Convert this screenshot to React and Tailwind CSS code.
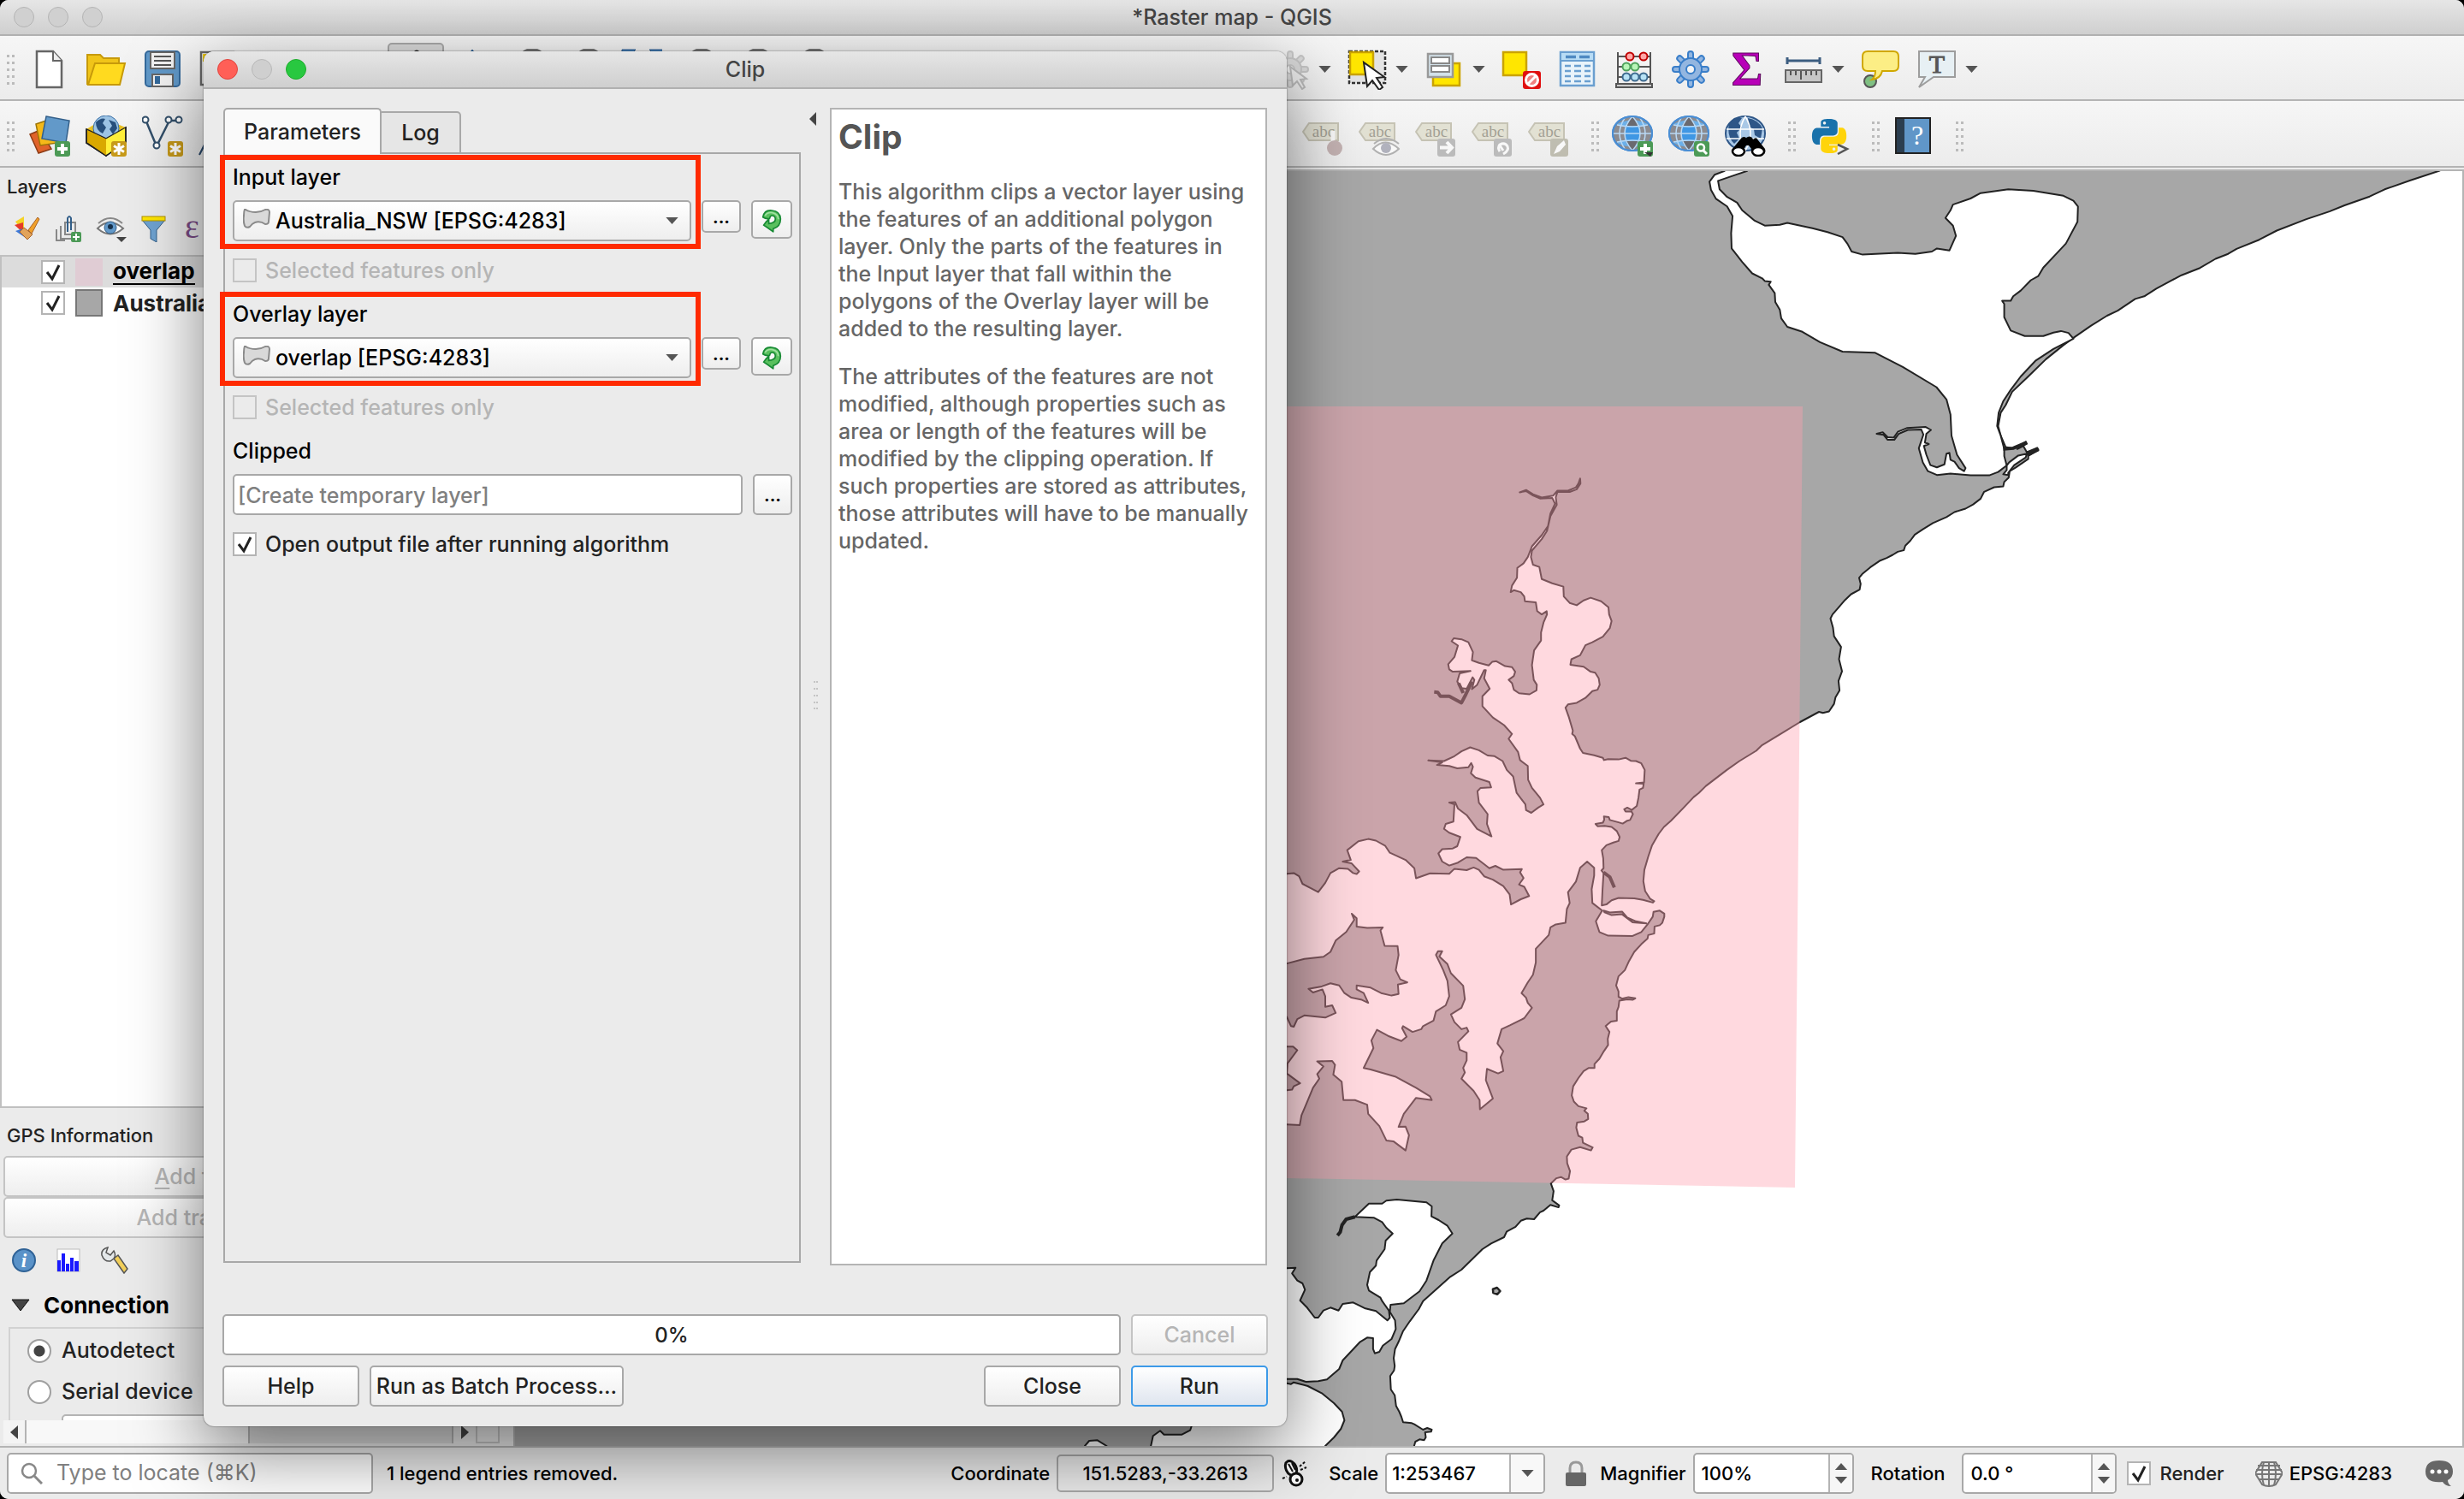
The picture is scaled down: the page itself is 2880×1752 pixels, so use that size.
import React from "react";

/* ---------- map geometry ---------- */

const sheet = (ox, oy, sx, sy) => (s) =>
  s.trim().split(/\s+/).map((p) => {
    const [x, y] = p.split(",").map(Number);
    return `${(ox + x / sx).toFixed(1)},${(oy + y / sy).toFixed(1)}`;
  }).join(" ");

const north = sheet(1960, 190, 1.7043, 2.24);
const mid = sheet(1500, 500, 2.45, 2.6133);
const south = sheet(1500, 900, 2.45, 2.8);
const far = sheet(1500, 1350, 2.45, 3);
const corner = sheet(900, 1480, 1.568, 3);

const SEA = [
  "2960,150",
  north(`1518,22 1460,47 1410,70 1380,89 1330,112 1300,128 1254,148 1195,178 1160,202 1115,226 1098,239 1073,252 1042,276 1005,295 985,309 955,330 931,350 913,357 878,388 857,401 825,427 790,459 770,478 735,515 700,560 668,600 655,635 645,655 640,690 645,715 655,745 668,748 680,742 695,731 697,736 678,750 690,742 697,758 718,747 720,752 700,768 700,776 675,798 663,808 661,825 652,836 650,848 632,850 612,862 605,880 590,895 575,906 553,915 537,928 510,944 490,960 474,974 465,990 455,1003 452,1015 440,1019 430,1027 418,1035 405,1042 385,1060 370,1076 363,1087 366,1103 364,1118 347,1130 335,1145 320,1168 310,1183 306,1194 311,1218 313,1240 327,1268 323,1300 329,1332 322,1357 324,1382 316,1400 313,1417 303,1437 291,1441 283,1438 245,1465 205,1497 170,1525 158,1540`),
  mid(`1306,1018 1270,1045 1210,1094 1190,1115 1175,1128 1145,1162 1110,1200 1090,1219 1075,1240 1056,1275 1045,1310 1034,1350 1031,1385 1036,1415 1050,1438 1062,1446 1058,1450 1030,1442 1005,1437 960,1436 940,1443 925,1456 912,1459 914,1410 917,1360 911,1352 917,1345 916,1315 912,1290 925,1275 945,1267 960,1262 963,1250 955,1232 940,1219 920,1216 900,1217 894,1210 915,1206 919,1197 918,1187 932,1189 935,1198 960,1205 972,1209 985,1200 993,1198 1001,1180 997,1172 980,1172 976,1165 985,1160 998,1167 1012,1155 1017,1130 1020,1105 1030,1100 1032,1087 1010,1086 1033,1083 1035,1045 1025,1025 1010,1018 995,1017 980,1008 960,1013 930,1012 918,1015 915,1008 890,1000 858,993 850,980 835,942 827,935 829,925 818,885 808,855 815,845 840,840 865,825 885,804 900,800 906,785 903,765 893,748 880,745 860,730 822,724 825,707 850,695 865,664 885,655 915,638 935,612 940,590 933,570 931,548 910,530 880,519 860,527 840,542 820,535 803,515 802,485 770,475 740,462 733,425 715,418 709,395 712,375 740,340 755,315 765,270 783,235 780,212 785,196 820,196 840,188 851,170 850,155 845,170 838,182 815,192 785,192 773,207 740,213 715,203 695,190 677,197 695,193 715,207 735,216 770,214 778,232 765,262 758,300 740,328 712,362 700,395 688,414 670,428 669,458 655,482 651,502 660,496 680,502 690,515 692,530 723,533 727,560 740,570 754,560 755,570 745,595 738,625 738,650 718,680 712,725 717,770 726,785 725,802 705,814 675,811 660,800 655,780 645,770 660,758 664,745 655,731 635,728 610,713 598,715 588,726 560,718 540,710 543,685 530,655 510,646 488,643 482,652 500,665 490,700 472,722 475,738 485,745 536,743 505,750 498,775 510,795 525,797 542,762 547,770 540,798 555,785 575,740 580,740 575,765 591,797 570,820 570,850 600,885 632,908 655,935 645,950 672,990 678,1015 700,1033 701,1075 712,1100 735,1130 745,1150 730,1160 710,1176 695,1168 693,1150 668,1115 658,1065 640,1045 628,1018 605,1003 585,1001 560,985 535,976 510,988 490,1003 460,1018 415,1016 455,1022 440,1030 475,1033 498,1040 530,1037 538,1024 543,1035 537,1055 550,1068 590,1082 595,1098 565,1100 556,1110 560,1145 585,1180 583,1210 596,1248 555,1225 525,1183 500,1163 492,1143 475,1145 490,1150 487,1203 465,1210 460,1225 475,1237 507,1250 498,1278 485,1285 455,1287 444,1300 455,1325 475,1337 500,1328 525,1312 552,1314 590,1345 607,1338 630,1350 683,1348 678,1358 688,1375 675,1395 690,1402 704,1430 680,1440 652,1456 648,1425 630,1400 600,1380 575,1370 560,1350 545,1343 525,1351 490,1347 475,1362 420,1361 380,1376 375,1345 350,1320 305,1298 292,1277 265,1261 243,1256 215,1263 183,1290 193,1320 170,1325 195,1330 217,1355 210,1363 200,1360 185,1347 160,1345 135,1360 120,1390 100,1418 55,1393 45,1370 30,1360 10,1362 -200,1362`),
  south(`-200,633 10,633 60,618 115,611 135,595 150,558 180,530 203,490 196,470 210,485 210,512 240,517 285,515 278,525 290,575 327,576 330,605 322,655 335,685 355,695 328,702 330,733 310,738 280,730 250,712 210,705 210,718 230,730 243,762 225,752 195,745 175,730 160,705 135,698 110,708 72,716 85,728 112,718 120,740 120,775 140,770 150,795 120,810 60,803 40,815 30,840 22,838 10,808 -200,808 -200,905 28,905 40,917 12,960 10,993 48,1025 30,1035 25,1046 10,1048 -200,1048 -200,1160 10,1160 47,1162 52,1130 65,1095 85,1040 103,1010 97,995 115,970 97,953 140,952 148,965 143,997 167,1020 172,1080 205,1080 240,1095 243,1125 275,1165 295,1212 315,1215 350,1245 360,1195 350,1167 330,1168 345,1125 380,1073 425,1080 420,1068 380,1040 320,1003 250,980 230,975 258,910 252,885 268,850 300,870 338,887 353,873 340,845 343,838 370,857 395,848 400,838 430,820 437,790 465,770 475,740 470,690 458,655 437,605 443,593 455,593 447,610 470,635 480,665 515,706 520,750 510,778 480,800 490,825 510,848 525,843 530,855 500,890 505,915 525,925 525,950 515,975 520,990 510,1010 545,1050 562,1080 563,1110 600,1075 580,1015 583,978 615,993 630,985 622,940 630,920 613,895 625,848 650,835 690,812 712,778 700,762 695,745 682,730 700,695 715,670 723,630 723,585 760,540 765,515 780,505 808,500 812,455 820,435 815,400 838,365 850,320 870,300 890,320 890,345 883,390 885,435 913,460 895,495 905,530 930,542 1000,543 1025,530 1045,502 1058,480 1060,464 1078,460 1091,470 1091,480 1085,500 1078,508 1063,512 1062,535 1045,540 1043,552 1025,570 1005,595 990,625 978,655 960,675 953,705 960,725 960,742 970,748 988,743 1008,747 1000,752 985,750 962,755 960,775 955,790 955,820 938,823 923,838 934,857 929,880 930,900 918,920 905,945 891,962 891,975 875,975 860,985 845,1008 830,1035 826,1065 832,1085 845,1100 868,1107 862,1115 872,1125 873,1142 862,1150 841,1154 839,1170 845,1197 856,1203 858,1220 886,1235 881,1245 850,1234 825,1242 812,1265 813,1287 821,1313 817,1337 808,1340 795,1332 782,1336 766,1353 774,1378 770,1408 790,1425 788,1431 765,1423 745,1442 735,1447 718,1470 697,1468 680,1475 665,1495 640,1510`),
  far(`632,288 595,310 570,330 510,402 478,427 400,512 388,540 362,583 343,617 330,655 320,680 316,712 319,740 317,755 306,775 308,822 319,842 323,880 332,900 338,918 343,937 368,940 375,944 400,963 412,957 425,963 423,970 406,972 408,990 403,1000 390,997 378,1005 370,1040`),
  "1700,1800 2960,1800",
].join(" ");

const BAY = north(`95,-20 95,22 75,32 65,50 68,72 78,95 100,115 111,140 108,185 109,225 130,260 150,290 170,303 175,310 187,312 183,320 195,342 196,365 205,385 208,408 220,430 250,443 285,470 330,495 395,498 450,535 517,588 537,620 545,660 547,715 558,765 575,800 572,808 562,800 553,783 545,778 543,760 537,762 533,790 518,798 505,792 497,765 492,742 502,737 494,733 497,710 506,700 495,692 458,695 440,705 432,720 420,719 410,706 398,710 412,713 420,726 433,726 442,710 460,700 487,699 491,712 482,748 490,785 500,808 518,818 545,814 585,819 622,819 640,810 657,793 652,768 652,750 645,715 638,690 641,655 650,625 665,595 685,560 715,518 750,488 790,461 780,446 765,441 750,445 730,454 693,454 665,440 652,405 652,370 648,362 665,362 670,350 685,335 705,308 720,297 730,275 755,240 775,212 798,155 799,115 790,100 770,87 710,74 660,70 605,80 585,94 550,110 545,125 535,145 550,165 556,192 543,230 518,225 508,233 475,239 440,236 370,241 348,233 340,213 330,195 300,182 270,172 220,158 205,163 175,165 155,152 130,125 120,105 100,90 85,70 82,48 140,22 140,-20`);
const CHANNEL = north(`657,793 662,785 680,767 697,762 695,772 672,792 660,812 660,818 650,816 657,805`);
const BREAKWATER_N = north(`650,750 670,748 697,733`);
const BREAKWATER_S = north(`697,765 720,750`);
const LAKE = far(`205,217 245,170 283,170 295,160 325,156 410,166 425,180 424,215 445,228 470,248 484,275 455,310 430,370 410,440 390,478 345,520 307,525 305,550 320,580 322,610 310,645 285,668 275,690 262,695 257,680 257,642 240,640 220,655 170,720 160,750 125,787 100,793 65,795 40,785 10,785 -100,785 -100,397 10,397 35,395 25,415 40,440 55,450 62,472 48,510 68,535 90,570 100,570 115,545 135,535 158,545 170,522 200,517 235,538 265,547 298,580 305,570 302,545 283,512 278,500 245,475 240,455 248,410 265,388 267,370 290,330 293,300 313,275 295,255 283,235 260,220`);
const LAGOON = corner("698,660 698,630 702,595 715,577 722,590 755,590 770,575 773,558 773,500 940,410") + " " + far(`10,800 22,803 30,797 70,810 110,835 145,870 168,900 175,930 165,960 145,990 120,1020 110,1060`);
const POND = corner("570,660 577,630 585,612 600,610 617,630 625,660");
const ISLAND = far("600,470 612,465 621,477 613,488 601,483");
const SPIT = south("917,460 935,466 970,463 985,483 1010,495 1040,502 1000,498 970,472 940,475 920,466");
const CREEK = mid("917,1358 935,1372 948,1404");
const CREEK2 = mid("432,807 442,808 450,820 475,820 510,840 520,820 540,775");
const CREEK3 = mid("502,780 515,810");
const CREEK4 = far("155,282 163,270 168,245 180,225 205,217");

function MapView() {
  const water = { fill: "#fff", stroke: "#222", strokeWidth: 2, strokeLinejoin: "round" };
  return (
    <svg viewBox="602 200 2276 1490" preserveAspectRatio="xMinYMin slice" className="block h-full w-full" role="img" aria-label="Map canvas">
      <rect x="0" y="0" width="3400" height="2200" fill="#a7a7a7" />
      <polygon points={SEA} {...water} />
      <polygon points={BAY} {...water} />
      <polygon points={CHANNEL} {...water} />
      <polyline points={BREAKWATER_N} fill="none" stroke="#222" strokeWidth="4" />
      <polyline points={BREAKWATER_S} fill="none" stroke="#222" strokeWidth="5" />
      <polygon points={LAKE} {...water} />
      <polygon points={LAGOON} {...water} />
      <polygon points={POND} {...water} />
      <polygon points={ISLAND} {...water} fill="#a7a7a7" strokeWidth="2.500" />
      <polygon points={SPIT} {...water} fill="#a7a7a7" />
      <g fill="none" stroke="#222" strokeLinejoin="round">
        <polyline points={CREEK} strokeWidth="4" />
        <polyline points={CREEK2} strokeWidth="4" />
        <polyline points={CREEK3} strokeWidth="4" />
        <polyline points={CREEK4} strokeWidth="4" />
      </g>
      <polygon points="1000,475 2107,475 2098,1388 1504,1377 1000,1368" fill="#ffa0af" fillOpacity="0.4" />
    </svg>
  );
}

/* ---------- icons ---------- */

const Svg = ({ children, box = 48, className = "size-12" }) => (
  <svg viewBox={`0 0 ${box} ${box}`} className={className} aria-hidden="true">{children}</svg>
);

const Badge = ({ fill = "#4c9a56", children }) => (
  <g>
    <rect x="30" y="30" width="18" height="18" rx="3" fill={fill} />
    {children}
  </g>
);
const Star = () => (
  <path d="M39 32v14M33 35.500l12 7M33 42.500l12-7" stroke="#fff" strokeWidth="3" />
);
const PlusMark = () => <path d="M39 33v12M33 39h12" stroke="#fff" strokeWidth="4" />;

const FileIcon = () => (
  <Svg><path d="M9 3h19l10 11v31H9z" fill="#fff" stroke="#666" strokeWidth="2.500" /><path d="M28 3v11h10" fill="#eee" stroke="#666" strokeWidth="2" /></Svg>
);
const FolderIcon = () => (
  <Svg><path d="M2 7h15l4 4h18v30H2z" fill="#f0c419" stroke="#c79a0a" strokeWidth="2" /><path d="M11 17h35l-6 25H3z" fill="#ffda1f" stroke="#c79a0a" strokeWidth="2" /></Svg>
);
const SaveIcon = () => (
  <Svg>
    <rect x="4" y="3" width="40" height="41" rx="4" fill="#6098c8" stroke="#34699b" strokeWidth="2" />
    <rect x="10" y="4" width="28" height="19" fill="#f2f2f2" stroke="#666" strokeWidth="2" />
    <path d="M14 9h20M14 14h20M14 19h20" stroke="#555" strokeWidth="2" />
    <rect x="12" y="30" width="24" height="14" fill="#f2f2f2" stroke="#666" strokeWidth="2" />
    <rect x="15" y="32" width="6" height="9" fill="#34699b" />
  </Svg>
);
const LayoutIcon = () => (
  <Svg><rect x="3" y="4" width="38" height="38" fill="#fff" stroke="#666" strokeWidth="2.500" /><rect x="5" y="6" width="9" height="9" fill="#e8c400" /></Svg>
);
const HandIcon = () => (
  <Svg><path d="M18 44c-6-8-12-14-10-18 4-2 6 2 9 5V8c0-5 5-5 5 0 0-7 6-7 6 0 0-5 6-5 6 1 0-4 5-3 5 1v20c0 6-3 8-4 14z" fill="#fff" stroke="#222" strokeWidth="2.500" /></Svg>
);
const ArrowsIcon = () => (
  <Svg><path d="M24 1l7 10h-4v10h10v-4l10 7-10 7v-4H27v10h4l-7 10-7-10h4V27H11v4L1 24l10-7v4h10V11h-4z" fill="#4a88c2" stroke="#2c5f94" /></Svg>
);
const ZoomIcon = () => (
  <Svg><circle cx="28" cy="17" r="16" fill="#eef3f6" stroke="#777" strokeWidth="4" /><path d="M16 30L4 43" stroke="#777" strokeWidth="6" /></Svg>
);
const ZoomFullIcon = () => (
  <Svg><path d="M4 1h13l-5 5 8 8-6 6-8-8-5 5V1zM46 1H33l5 5-8 8 6 6 8-8 5 5V1z" fill="#4a88c2" stroke="#2c5f94" /><circle cx="26" cy="20" r="12" fill="#eee" stroke="#777" strokeWidth="3" /></Svg>
);
const GearShape = ({ fill, stroke }) => (
  <g fill={fill} stroke={stroke} strokeWidth="2">
    {[0, 45, 90, 135].map((a) => (
      <rect key={a} x="21" y="3" width="6" height="42" rx="3" transform={`rotate(${a} 24 24)`} />
    ))}
    <circle cx="24" cy="24" r="13" />
    <circle cx="24" cy="24" r="11.500" stroke="none" />
    <circle cx="24" cy="24" r="5" fill="#f5f5f5" />
  </g>
);
const GearIcon = () => <Svg><GearShape fill="#93b6e0" stroke="#397ec9" /></Svg>;
const GearDimIcon = () => (
  <Svg><g opacity="0.6"><GearShape fill="#ccc" stroke="#aaa" /><path d="M24 21l3 22 5-5 6 9 3-2-5-9 7-1z" fill="#eee" stroke="#999" strokeWidth="2" /></g></Svg>
);
const SelectIcon = () => (
  <Svg>
    <rect x="3" y="3" width="42" height="37" fill="#e3e3e3" stroke="#333" strokeWidth="2.500" strokeDasharray="4 2" />
    <rect x="4" y="4" width="27" height="26" fill="#ffe600" stroke="#caa300" strokeWidth="2.500" />
    <path d="M20 16l4 28 6-7 8 11 4-3-7-11 9-1z" fill="#fff" stroke="#222" strokeWidth="2" />
  </Svg>
);
const FormSelectIcon = () => (
  <Svg>
    <rect x="11" y="17" width="31" height="26" fill="#ffe600" stroke="#caa300" strokeWidth="2.500" />
    <rect x="5" y="6" width="29" height="27" fill="#d3e2ea" stroke="#999" strokeWidth="2.500" />
    <rect x="9" y="10" width="21" height="7" fill="#fff" stroke="#888" strokeWidth="2" />
    <rect x="9" y="20" width="21" height="7" fill="#fff" stroke="#888" strokeWidth="2" />
  </Svg>
);
const DeselectIcon = () => (
  <Svg>
    <rect x="3" y="4" width="27" height="27" fill="#ffe600" stroke="#caa300" strokeWidth="2.500" />
    <rect x="26" y="26" width="21" height="21" rx="3" fill="#e01010" />
    <circle cx="36.500" cy="36.500" r="7" fill="#f08080" stroke="#fff" strokeWidth="3" />
    <path d="M31.500 41.500l10-10" stroke="#fff" strokeWidth="3" />
  </Svg>
);
const TableIcon = () => (
  <Svg>
    <rect x="4" y="4" width="39" height="39" fill="#e9f3fa" stroke="#6a9fd0" strokeWidth="2.500" />
    <rect x="5" y="5" width="37" height="9" fill="#b8dcf5" />
    <path d="M5 14h37" stroke="#6a9fd0" strokeWidth="2" />
    <path d="M10 9.500h12M26 9.500h12" stroke="#4f8ac2" strokeWidth="3.500" />
    <path d="M9 20h7M20 20h8M32 20h7M9 26h7M20 26h8M32 26h7M9 32h7M20 32h8M32 32h7M9 38h7M20 38h8M32 38h7" stroke="#6a9fd0" strokeWidth="2.500" />
  </Svg>
);
const AbacusIcon = () => (
  <Svg>
    <path d="M5 4v37M43 4v37M5 9h38M5 21h38M5 33h38" stroke="#555" strokeWidth="2" />
    {[19, 35].map((x) => <circle key={x} cx={x} cy="9" r="4.500" fill="#ffa8a8" stroke="#c00000" strokeWidth="2" />)}
    {[15, 25].map((x) => <circle key={x} cx={x} cy="21" r="4.500" fill="#b8f5b8" stroke="#4fa35c" strokeWidth="2" />)}
    {[15, 25, 35].map((x) => <circle key={x} cx={x} cy="33" r="4.500" fill="#b8e2f5" stroke="#3d6a8f" strokeWidth="2" />)}
    <rect x="3" y="41" width="42" height="4" fill="#ccc" stroke="#555" strokeWidth="2" />
  </Svg>
);
const SigmaIcon = () => (
  <svg viewBox="0 0 48 60" className="h-[60px] w-12" aria-hidden="true"><text x="24" y="49" textAnchor="middle" fontSize="56" fontWeight="700" fontFamily="Liberation Serif, serif" fill="#b800b8" stroke="#5c0a5c" strokeWidth="1">Σ</text></svg>
);
const RulerIcon = () => (
  <Svg>
    <path d="M5 14h38M5 10v8M43 10v8" stroke="#3c5d80" strokeWidth="3" />
    <rect x="3" y="25" width="42" height="14" fill="#c6c6c6" stroke="#666" strokeWidth="2" />
    <path d="M9 26v5M15 26v5M21 26v10M27 26v5M33 26v5M39 26v5" stroke="#555" strokeWidth="2" />
  </Svg>
);
const TipIcon = () => (
  <Svg>
    <circle cx="12" cy="38" r="7" fill="#7fc083" stroke="#555" strokeWidth="2" />
    <path d="M9 3h30q6 0 6 6v11q0 6-6 6H26q-2 9-12 10 4-3 4-10H9q-6 0-6-6V9q0-6 6-6z" fill="#fcee85" stroke="#d0a800" strokeWidth="2" />
  </Svg>
);
const TextNoteIcon = () => (
  <Svg>
    <path d="M3 3h42v30H20L3 45l7-12H3z" fill="#e7f0f4" stroke="#9d9d9d" strokeWidth="2" />
    <text x="24" y="28" textAnchor="middle" fontSize="30" fontFamily="Liberation Serif, serif" fill="#555" stroke="#555">T</text>
  </Svg>
);
const StackIcon = () => (
  <Svg>
    <path d="M1 22l12-5 13 22-15 5z" fill="#e0632a" stroke="#8d3c16" strokeWidth="1.500" />
    <path d="M8 10l15-5 10 27-20 3z" fill="#f5b918" stroke="#9c7508" strokeWidth="1.500" />
    <path d="M20 1l27 5-4 26-28-5z" fill="#6299c9" stroke="#335f89" strokeWidth="1.500" />
    <Badge><PlusMark /></Badge>
  </Svg>
);
const PackageIcon = () => (
  <Svg>
    <path d="M1 16L24 27v20L1 32z" fill="#d9a800" stroke="#222" strokeWidth="1.500" />
    <path d="M24 27l23-13v17L24 47z" fill="#ffef3a" stroke="#222" strokeWidth="1.500" />
    <path d="M1 16l10-6h26l10 4-23 13z" fill="#e8c020" />
    <circle cx="24" cy="15" r="15" fill="#9cc3e4" stroke="#3b6fa5" />
    <path d="M12 8q6-6 11-4l-3 5 4 5-4 7q-8-4-8-13zM27 5l8 3 2 7-5 7-4-6 3-4z" fill="#274f7c" />
    <path d="M1 16L24 27v20M24 27l23-13v17L24 47 1 32V16" fill="none" stroke="#222" strokeWidth="1.500" />
    <path d="M2 17l22 10.500v19L2 31z" fill="#d9a800" /><path d="M24 27.500L46 15v16L24 46z" fill="#ffef3a" />
    <Badge fill="#c79a1a"><Star /></Badge>
  </Svg>
);
const VectorIcon = () => (
  <Svg>
    <path d="M5 7l12 29L32 6h9" fill="none" stroke="#33506b" strokeWidth="2.500" />
    {[[4, 5], [17, 35], [31, 5], [43, 5]].map(([x, y]) => <circle key={x} cx={x} cy={y} r="3.500" fill="#fff" stroke="#33506b" strokeWidth="2" />)}
    <Badge fill="#c79a1a"><Star /></Badge>
  </Svg>
);
const FeatherIcon = () => <Svg><path d="M1 46L22 6l6 14-20 12z" fill="#5c8fc0" stroke="#29486b" strokeWidth="2" /></Svg>;

function LabelIcon({ kind }) {
  return (
    <Svg>
      <g opacity="0.6">
        <path d="M1 19L8 9h34v20H8z" fill="#d9d7c0" stroke="#a9a58c" strokeWidth="2" />
        <text x="25" y="25" textAnchor="middle" fontSize="19" fontFamily="Liberation Serif, serif" fill="#6f6b58">abc</text>
        {kind === "pin" && <><path d="M36 18v16" stroke="#fff" strokeWidth="5" /><circle cx="38" cy="38" r="9" fill="#a88b8b" /></>}
        {kind === "eye" && <><path d="M17 39q14-15 30 0-15 14-30 0z" fill="#fff" stroke="#888" strokeWidth="2" /><circle cx="32" cy="38" r="6" fill="#888a9c" /><path d="M18 33q14-12 29 0" fill="none" stroke="#888" strokeWidth="2" /></>}
        {kind === "move" && <><rect x="26" y="27" width="21" height="21" rx="3" fill="#9a9a9a" /><path d="M29 37.500h14M37 31l6 6.500-6 6.500" fill="none" stroke="#fff" strokeWidth="4" /></>}
        {kind === "turn" && <><rect x="26" y="27" width="21" height="21" rx="3" fill="#9a9a9a" /><path d="M37 45q7-4 5-9-3-5-9-2-3 4 0 8M33 35l4 6" fill="none" stroke="#fff" strokeWidth="3" /></>}
        {kind === "edit" && <><rect x="26" y="27" width="21" height="21" rx="3" fill="#a09d88" /><path d="M30 45l4-9 8-7 2 5-7 8z" fill="#fff" /></>}
      </g>
    </Svg>
  );
}

const Globe = () => (
  <g>
    <ellipse cx="24" cy="21" rx="23" ry="20" fill="#8b8b90" stroke="#4a8ed4" strokeWidth="2" />
    <path d="M6 10Q24 1 42 10l-5 3H11zM6 32q18 9 36 0l-5-3H11z" fill="#6bb0ea" />
    <path d="M24 2q-5 3-8 10h16q-3-7-8-10zM24 40q-5-3-8-10h16q-3 7-8 10z" fill="#6a6a70" />
    <rect x="15" y="12" width="18" height="18" fill="#3f97e4" />
    <path d="M1 21h46M6 11q18 4 36 0M6 31q18-4 36 0M24 1q-18 20 0 40M24 1q18 20 0 40M15 3Q3 21 15 39M33 3q12 18 0 36" fill="none" stroke="#b9d9f5" strokeWidth="1.500" />
    <ellipse cx="24" cy="21" rx="23" ry="20" fill="none" stroke="#4a8ed4" strokeWidth="2" />
  </g>
);
const GlobePlusIcon = () => <Svg><Globe /><Badge><PlusMark /></Badge><path d="M38 43h10l-3 5z" fill="#333" /></Svg>;
const GlobeSearchIcon = () => (
  <Svg><Globe /><Badge><circle cx="38" cy="37.500" r="4" fill="none" stroke="#fff" strokeWidth="2.500" /><path d="M41 41l4 4" stroke="#fff" strokeWidth="3" /></Badge></Svg>
);
const GlobeBinocularsIcon = () => (
  <Svg>
    <ellipse cx="24" cy="21" rx="23" ry="20" fill="#a9c8e6" stroke="#2e5687" strokeWidth="2" />
    <path d="M5 9q8-8 15-6l-4 6 4 5-6 6 3 7-6 6Q2 24 5 9zM27 3q12 2 17 12l-2 12-7-4-1-7-6-3z" fill="#2e5687" />
    <path d="M24 1q-12 20 0 40M24 1q12 20 0 40M2 16h44M2 27h44" fill="none" stroke="#fff" strokeWidth="1.500" />
    <path d="M18 29q3-5 7-2 4-3 7 0l1 2q4-4 6 1l8 10q2 8-8 7-8-1-8-7l-3-4h-3l-3 5q-2 6-8 6-6-1-5-7z" transform="translate(0 -1)" fill="#000" />
    <ellipse cx="16" cy="42" rx="7" ry="5" fill="#fff" stroke="#000" strokeWidth="2.500" />
    <ellipse cx="39" cy="42" rx="7" ry="5" fill="#fff" stroke="#000" strokeWidth="2.500" />
  </Svg>
);
const PY = "M14.25.18l.9.2.73.26.59.3.45.32.34.34.25.34.16.33.1.3.04.26.02.2-.01.13V8.5l-.05.63-.13.55-.21.46-.26.38-.3.31-.33.25-.35.19-.35.14-.33.1-.3.07-.26.04-.21.02H8.770l-.69.05-.59.14-.5.22-.41.27-.33.32-.27.35-.2.36-.15.37-.1.35-.07.32-.04.27-.02.21v3.06H3.170l-.21-.03-.28-.07-.32-.12-.35-.18-.36-.26-.36-.36-.35-.46-.32-.59-.28-.73-.21-.88-.14-1.050-.05-1.230.06-1.220.16-1.040.24-.87.32-.71.36-.57.4-.44.42-.33.42-.24.4-.16.36-.1.32-.05.24-.01h.16l.06.01h8.160v-.83H6.180l-.01-2.750-.02-.37.05-.34.11-.31.17-.28.25-.26.31-.23.38-.2.44-.18.51-.15.58-.12.64-.1.71-.06.77-.04.84-.02 1.270.05zm-6.300 1.980l-.23.33-.08.41.08.41.23.34.33.22.41.09.41-.09.33-.22.23-.34.08-.41-.08-.41-.23-.33-.33-.22-.41-.09-.41.09z";
const PythonIcon = () => (
  <Svg>
    <g transform="translate(4 4) scale(1.670)"><path d={PY} fill="#1a72ab" /><path d={PY} fill="#ffd40a" transform="rotate(180 12 12)" /></g>
    <path d="M34 34l11 5-11 6" fill="none" stroke="#555" strokeWidth="2.500" />
  </Svg>
);
const BookIcon = () => (
  <Svg>
    <rect x="4" y="3" width="40" height="41" fill="#6096c8" stroke="#222" strokeWidth="2" />
    <rect x="5" y="4" width="9" height="39" fill="#2b3e50" />
    <text x="29" y="34" textAnchor="middle" fontSize="32" fontFamily="Liberation Serif, serif" fill="#fff">?</text>
  </Svg>
);
const PolygonIcon = () => (
  <svg viewBox="0 0 32 24" className="h-6 w-8" aria-hidden="true">
    <path d="M3 1q5 3 12 3 6 0 11-3 5-1 5 3l-1 11q0 3-4 3-6-4-12-2-3 1-6 5-4 2-6-1-2-6-1-12 0-7 2-9z" fill="#d9d9d9" stroke="#8a8a8a" strokeWidth="2" />
  </svg>
);
const RefreshIcon = () => (
  <svg viewBox="0 0 28 32" className="h-7 w-6" aria-hidden="true">
    <path d="M2 11Q4 1 14 2q12 1 12 12 0 10-10 13v4l-7-5-6-4 3-4 4-4v6q9-1 9-6 0-5-5-5-2 0-3 4-5 1-9-2z" fill="#59c05e" stroke="#178a34" strokeWidth="2" strokeLinejoin="round" />
    <path d="M5 9q3-5 10-4 8 2 8 9" fill="none" stroke="#9fe0a0" strokeWidth="2" />
  </svg>
);
const Caret = ({ className = "" }) => (
  <svg viewBox="0 0 16 9" className={`h-[8px] w-[15px] shrink-0 ${className}`} aria-hidden="true"><path d="M0 0h16L8 9z" fill="#555" /></svg>
);

/* ---------- shared controls ---------- */

function Tool({ label, children, className = "" }) {
  return (
    <button type="button" aria-label={label} className={`flex h-[62px] w-[66px] shrink-0 items-center justify-center ${className}`}>
      {children}
    </button>
  );
}
function Menu({ label }) {
  return (
    <button type="button" aria-label={label} className="flex h-[62px] w-6 shrink-0 items-center">
      <Caret />
    </button>
  );
}
function Grip({ className = "w-8 justify-end pr-[6px]" }) {
  return (
    <span className={`flex shrink-0 ${className}`}>
      <svg viewBox="0 0 9 36" className="h-9 w-[9px]" aria-hidden="true">
        {[1, 9, 17, 25, 33].map((y) => <g key={y} fill="#bbb"><rect x="0" y={y} width="3" height="3" /><rect x="6" y={y} width="3" height="3" /></g>)}
      </svg>
    </span>
  );
}

function Check({ checked, disabled, className = "" }) {
  return (
    <span className={`relative flex size-7 shrink-0 items-center justify-center ${className}`}>
      <input type="checkbox" defaultChecked={checked} disabled={disabled} className="size-7 appearance-none border-2 border-[#b4b4b4] bg-white disabled:border-[#c4c4c4] disabled:bg-transparent" />
      {checked && (
        <svg viewBox="0 0 28 28" className="pointer-events-none absolute inset-0 size-7" aria-hidden="true"><path d="M7 14l6 8 8-16" fill="none" stroke="#222" strokeWidth="3" /></svg>
      )}
    </span>
  );
}

const BTN = "shrink-0 rounded-[5px] border-2 border-[#a8a8a8] bg-linear-to-b from-white to-[#eeeeee] pt-[2px] text-center text-[25px] text-[#222]";

function PushButton({ children, className = "", ...rest }) {
  return <button type="button" className={`h-12 ${BTN} ${className} disabled:border-[#c4c4c4] disabled:text-[#b5b5b5]`} {...rest}>{children}</button>;
}

/* ---------- left docks ---------- */

function LayerRow({ name, active, swatch }) {
  return (
    <label className={`flex h-9 shrink-0 items-center pl-[46px] text-[26px] font-bold ${active ? "bg-[#dcdcdc]" : ""}`}>
      <Check checked />
      <span className={`mx-3 size-8 ${swatch}`} />
      <span className={active ? "border-b-2 border-black leading-[28px] text-black" : "text-[#222]"}>{name}</span>
    </label>
  );
}

function LeftDock() {
  return (
    <aside className="flex w-[600px] shrink-0 flex-col overflow-hidden bg-[#ebebeb]">
      <h2 className="flex h-11 shrink-0 items-center pl-2 text-[22px] text-[#222]">Layers</h2>
      <div className="flex h-[58px] shrink-0 items-center gap-4 pb-1 pl-4">
        <button type="button" aria-label="Styling"><Svg box={32} className="size-8"><path d="M2 8l10-6v20z" fill="#f5d327" /><path d="M1 12l10-3v12z" fill="#e43a2a" /><path d="M2 19l9-3 6 13z" fill="#3c78d8" /><path d="M12 15l10 8-6 6-9-9z" fill="#e2a35a" stroke="#a8642a" /><path d="M17 18L28 3l2 2-9 17z" fill="#f0a02a" stroke="#a8642a" /></Svg></button>
        <button type="button" aria-label="Add group"><Svg box={32} className="size-8"><path d="M12 9h12v14H12zM7 13v15h12M2 17v13h10" fill="none" stroke="#888" strokeWidth="2" /><path d="M15 20V4q2-4 4 0v14" fill="none" stroke="#335f89" strokeWidth="2" /><rect x="19" y="20" width="12" height="12" rx="2" fill="#4c9a56" /><path d="M25 22v8M21 26h8" stroke="#fff" strokeWidth="2" /></Svg></button>
        <button type="button" aria-label="Layer visibility"><Svg box={36} className="size-9"><path d="M2 18q14-14 30 0-15 13-30 0z" fill="#fff" stroke="#777" strokeWidth="2" /><circle cx="17" cy="17" r="7" fill="#6299c9" stroke="#335f89" /><circle cx="17" cy="16" r="3" fill="#16304a" /><path d="M3 12Q17 0 31 12" fill="none" stroke="#888" strokeWidth="2" /><path d="M24 28h12l-6 6z" fill="#444" /></Svg></button>
        <button type="button" aria-label="Filter legend"><Svg box={32} className="size-8"><path d="M2 6l10 12v10l7 4V18L29 6z" fill="#6fa3d2" stroke="#335f89" /><rect x="2" y="2" width="27" height="5" fill="#ffe600" stroke="#b09000" /></Svg></button>
        <button type="button" aria-label="Filter by expression" className="ml-1 pb-1 font-['Liberation_Serif',serif] text-[40px] leading-8 text-[#7a4b86]">ε</button>
      </div>
      <div className="flex min-h-0 flex-1 flex-col border-2 border-r-0 border-[#c0c0c0] bg-white">
        <LayerRow name="overlap" active swatch="bg-[#e0ccd4]" />
        <LayerRow name="Australia_NSW" swatch="border-2 border-[#777] bg-[#a7a7a7]" />
      </div>
      <h2 className="flex h-14 shrink-0 items-center pl-2 pt-2 text-[22px] text-[#222]">GPS Information</h2>
      <PushButton disabled className="ml-1 w-[494px]"><span className="underline underline-offset-4">A</span>dd feature</PushButton>
      <PushButton disabled className="ml-1 w-[494px]">Add track point</PushButton>
      <div className="flex h-[52px] shrink-0 items-center gap-6 pl-[14px]">
        <button type="button" aria-label="Position"><Svg box={28} className="size-7"><circle cx="14" cy="14" r="13" fill="#5a92c8" stroke="#2f6296" strokeWidth="2" /><text x="14" y="22" textAnchor="middle" fontSize="23" fontStyle="italic" fontWeight="700" fontFamily="Liberation Serif, serif" fill="#fff">i</text></Svg></button>
        <button type="button" aria-label="Signal"><Svg box={28} className="size-7"><rect x="1" y="1" width="26" height="26" fill="#fff" stroke="#bbb" /><path d="M1 27V14h4v13M6 27V6h4v21M11 27v-9h4v9M16 27V11h4v16M21 27V15h5v12" fill="#1a1aff" /></Svg></button>
        <button type="button" aria-label="Options"><Svg box={32} className="size-8"><path d="M15 14l5-4 11 16-4 5z" fill="#f2cf5a" stroke="#555" strokeWidth="1.500" /><path d="M1 10Q0 3 8 1L6 7l5 3 4-5q3 5 0 9l-4 3Q4 18 1 10z" fill="#e4e8ea" stroke="#555" strokeWidth="1.500" /></Svg></button>
      </div>
      <h3 className="flex h-[52px] shrink-0 items-center gap-4 pl-[13px] text-[26px] font-bold text-black">
        <svg viewBox="0 0 22 15" className="h-[15px] w-[22px]" aria-hidden="true"><path d="M1 1h20l-10 13z" fill="#444" stroke="#111" /></svg>
        Connection
      </h3>
      <div className="ml-[10px] flex h-[109px] shrink-0 flex-col overflow-hidden border-l-2 border-t-2 border-[#d2d2d2] pl-5">
        <label className="flex h-12 shrink-0 items-center gap-3 pt-1 text-[25px] text-[#222]">
          <input type="radio" name="connection" defaultChecked className="size-7 appearance-none rounded-full border-2 border-[#a0a0a0] bg-white checked:bg-[radial-gradient(circle,#444_0_6px,#fff_7px)]" />
          Autodetect
        </label>
        <label className="flex h-12 shrink-0 items-center gap-3 pt-1 text-[25px] text-[#222]">
          <input type="radio" name="connection" className="size-7 appearance-none rounded-full border-2 border-[#a0a0a0] bg-white" />
          Serial device
        </label>
        <input aria-label="Device" className="ml-10 mt-1 h-10 shrink-0 rounded-[5px] border-2 border-[#b4b4b4] bg-white" />
      </div>
      <div className="flex h-[30px] shrink-0 items-stretch pb-[3px] pl-1">
        <button type="button" aria-label="Scroll left" className="flex w-[27px] items-center justify-center border-r-2 border-[#b4b4b4] bg-[#f4f4f4]"><svg viewBox="0 0 9 16" className="h-4 w-[9px]" aria-hidden="true"><path d="M9 0v16L0 8z" fill="#444" /></svg></button>
        <span className="w-[259px] bg-[#f8f8f8]" />
        <span className="w-[240px] border-x-2 border-[#b4b4b4] bg-[#dadada]" />
        <button type="button" aria-label="Scroll right" className="flex w-[26px] items-center justify-center"><svg viewBox="0 0 9 16" className="h-4 w-[9px]" aria-hidden="true"><path d="M0 0v16l9-8z" fill="#444" /></svg></button>
        <span className="w-7 border-2 border-t-0 border-[#c4c4c4]" />
      </div>
    </aside>
  );
}

/* ---------- clip dialog ---------- */

function LayerField({ id, label, value }) {
  return (
    <div className="flex flex-col gap-5">
      <div className="flex items-start gap-3">
        <div className="relative flex flex-1 flex-col gap-3">
          <label htmlFor={id} className="h-8 text-[25px] leading-[34px] text-black">{label}</label>
          <div className="relative">
            <select id={id} className={`h-12 w-full appearance-none pl-12 text-left ${BTN} text-black`} defaultValue={value}>
              <option>{value}</option>
            </select>
            <span className="pointer-events-none absolute left-3 top-[10px]"><PolygonIcon /></span>
            <Caret className="pointer-events-none absolute right-[15px] top-5" />
          </div>
          <span className="pointer-events-none absolute -bottom-[9px] -left-[15px] -right-[11px] -top-[9px] border-[6px] border-[#ff2a00]" />
        </div>
        <button type="button" aria-label={`Browse ${label}`} className={`mt-11 flex h-[38px] w-[46px] items-center justify-center ${BTN}`}>
          <span className="text-[20px] font-bold leading-5 text-black">...</span>
        </button>
        <button type="button" aria-label={`Iterate over ${label}`} className={`mt-11 flex h-[45px] w-12 items-center justify-center ${BTN}`}><RefreshIcon /></button>
      </div>
      <label className="flex h-7 items-center gap-[10px] text-[25px] text-[#b5b5b5]"><Check disabled /><span className="pt-[2px]">Selected features only</span></label>
    </div>
  );
}

function ClipDialog() {
  return (
    <section role="dialog" aria-label="Clip" className="absolute bottom-[85px] left-[238px] top-[60px] flex w-[1266px] flex-col rounded-[12px] bg-[#ebebeb] shadow-[0_28px_84px_rgba(0,0,0,0.5),0_0_2px_rgba(0,0,0,0.6)]">
      <header className="flex h-11 shrink-0 items-center rounded-t-[12px] border-b-2 border-[#b0b0b0] bg-linear-to-b from-[#e6e6e6] to-[#cfcfcf] px-4">
        <div className="flex flex-1 gap-4">
          <button type="button" aria-label="Close window" className="size-6 rounded-full border border-[#e0443e] bg-[#ff5f57]" />
          <button type="button" aria-label="Minimise" className="size-6 rounded-full border border-[#b8b8b8] bg-[#cfcfcf]" />
          <button type="button" aria-label="Zoom" className="size-6 rounded-full border border-[#1dad2b] bg-[#28c840]" />
        </div>
        <h1 className="pt-[2px] text-[25px] text-[#444]">Clip</h1>
        <div className="flex-1" />
      </header>

      <div className="flex min-h-0 flex-1 px-[23px] pt-[22px]">
        <div className="flex w-[675px] shrink-0 flex-col pb-[3px]">
          <div role="tablist" className="relative z-10 -mb-[2px] flex items-end">
            <button type="button" role="tab" aria-selected="true" className="h-[54px] w-[185px] rounded-t-[5px] border-2 border-b-0 border-[#a8a8a8] bg-[#fafafa] pt-[2px] text-[25px] text-[#222]">Parameters</button>
            <button type="button" role="tab" aria-selected="false" className="h-[50px] w-[93px] rounded-tr-[5px] border-2 border-l-0 border-[#a8a8a8] bg-[#e6e6e6] pt-[2px] text-[25px] text-[#222]">Log</button>
          </div>
          <div className="flex flex-1 flex-col gap-5 border-2 border-[#a8a8a8] pl-[9px] pr-2 pt-[10px]">
            <LayerField id="input-layer" label="Input layer" value="Australia_NSW [EPSG:4283]" />
            <LayerField id="overlay-layer" label="Overlay layer" value="overlap [EPSG:4283]" />
            <div className="flex flex-col gap-5">
              <div className="flex flex-col gap-3">
                <label htmlFor="clipped" className="h-8 text-[25px] leading-[34px] text-black">Clipped</label>
                <div className="flex gap-3">
                  <input id="clipped" placeholder="[Create temporary layer]" className="h-12 min-w-0 flex-1 rounded-[5px] border-2 border-[#a8a8a8] bg-white px-1 pt-[2px] text-[25px] placeholder:text-[#808080]" />
                  <button type="button" aria-label="Browse Clipped" className={`flex h-12 w-[46px] items-center justify-center ${BTN}`}>
                    <span className="text-[20px] font-bold leading-5 text-black">...</span>
                  </button>
                </div>
              </div>
              <label className="flex h-7 items-center gap-[10px] text-[25px] text-[#222]"><Check checked /><span className="pt-[2px]">Open output file after running algorithm</span></label>
            </div>
          </div>
        </div>

        <div className="flex w-[34px] shrink-0 flex-col items-center justify-between pt-[5px]">
          <svg viewBox="0 0 8 16" className="ml-[10px] h-4 w-2 self-start" aria-hidden="true"><path d="M8 0v16L0 8z" fill="#444" /></svg>
          <svg viewBox="0 0 5 34" className="h-[34px] w-[5px]" aria-hidden="true">{[0, 8, 16, 24, 31].map((y) => <g key={y} fill="#c4c4c4"><rect y={y} width="2" height="2" /><rect x="3" y={y} width="2" height="2" /></g>)}</svg>
          <span />
        </div>

        <article className="min-w-0 flex-1 border-2 border-[#b4b4b4] bg-white px-2 text-[25px] leading-8 text-[#666]">
          <h2 className="mb-6 mt-2 text-[39px] font-bold leading-12 text-[#555]">Clip</h2>
          <p>
            This algorithm clips a vector layer using<br />the features of an additional polygon<br />layer. Only the parts of the features in<br />the Input layer that fall within the<br />polygons of the Overlay layer will be<br />added to the resulting layer.
          </p>
          <p className="mt-6">
            The attributes of the features are not<br />modified, although properties such as<br />area or length of the features will be<br />modified by the clipping operation. If<br />such properties are stored as attributes,<br />those attributes will have to be manually<br />updated.
          </p>
        </article>
      </div>

      <footer className="flex shrink-0 flex-col gap-3 px-[22px] pb-[23px] pt-[57px]">
        <div className="flex gap-3">
          <div role="progressbar" aria-valuenow={0} aria-valuemin={0} aria-valuemax={100} className="flex h-12 flex-1 items-center justify-center rounded-[5px] border-2 border-[#a8a8a8] bg-white pt-[2px] text-[24px] text-[#222]">0%</div>
          <PushButton disabled className="w-40">Cancel</PushButton>
        </div>
        <div className="flex gap-3">
          <PushButton className="w-40">Help</PushButton>
          <PushButton className="w-[297px] whitespace-nowrap">Run as Batch Process...</PushButton>
          <div className="flex-1" />
          <PushButton className="w-40">Close</PushButton>
          <button type="button" className="h-12 w-40 rounded-[5px] border-2 border-[#3d9ae8] bg-linear-to-b from-white to-[#dfe5ef] pt-[2px] text-[25px] text-[#222]">Run</button>
        </div>
      </footer>
    </section>
  );
}

/* ---------- status bar ---------- */

function Spin({ id, value, className }) {
  return (
    <span className={`flex h-12 shrink-0 overflow-hidden rounded-[5px] border-2 border-[#a8a8a8] bg-white ${className}`}>
      <input id={id} defaultValue={value} className="min-w-0 flex-1 bg-transparent pl-2 text-[22px] text-black" />
      <span className="flex w-7 flex-col items-center justify-center gap-2 border-l-2 border-[#b4b4b4] bg-[#f6f6f6]">
        <button type="button" aria-label={`Increase ${id}`}><svg viewBox="0 0 16 9" className="h-2 w-4" aria-hidden="true"><path d="M0 9h16L8 0z" fill="#555" /></svg></button>
        <button type="button" aria-label={`Decrease ${id}`}><svg viewBox="0 0 16 9" className="h-2 w-4" aria-hidden="true"><path d="M0 0h16L8 9z" fill="#555" /></svg></button>
      </span>
    </span>
  );
}

function StatusBar() {
  return (
    <footer className="flex h-[62px] shrink-0 items-center whitespace-nowrap border-t-2 border-[#b4b4b4] bg-[#ebebeb] pl-2 pr-3 text-[22px] text-black">
      <span className="relative flex h-12 w-[428px] shrink-0">
        <input aria-label="Locate" placeholder="Type to locate (⌘K)" className="w-full rounded-[5px] border-2 border-[#a8a8a8] bg-white pl-14 text-[25px] font-normal placeholder:text-[#808080]" />
        <svg viewBox="0 0 26 26" className="absolute left-4 top-[11px] size-[26px]" aria-hidden="true"><circle cx="10" cy="10" r="8" fill="none" stroke="#888" strokeWidth="2.500" /><path d="M16 16l9 9" stroke="#888" strokeWidth="3" /></svg>
      </span>
      <span className="ml-4">1 legend entries removed.</span>
      <label htmlFor="coord" className="ml-auto">Coordinate</label>
      <input id="coord" defaultValue="151.5283,-33.2613" className="ml-2 h-11 w-[254px] shrink-0 rounded-[5px] border-2 border-[#a8a8a8] bg-transparent text-center text-[22px]" />
      <button type="button" aria-label="Toggle extents" className="ml-2">
        <Svg box={32} className="size-8"><ellipse cx="12" cy="10" rx="6" ry="9" transform="rotate(-25 12 10)" fill="#fff" stroke="#111" strokeWidth="3" /><path d="M9 5l5 9M13 4l4 8" stroke="#111" strokeWidth="2" /><ellipse cx="18" cy="23" rx="7" ry="7" fill="#fff" stroke="#111" strokeWidth="3" /><circle cx="19" cy="24" r="2" fill="#111" /><path d="M22 8l7-6M23 12l7-3M2 22l5-2" stroke="#111" strokeWidth="2" strokeDasharray="3 2" /></Svg>
      </button>
      <label htmlFor="scale" className="ml-6">Scale</label>
      <span className="ml-2 flex h-12 w-[187px] shrink-0 overflow-hidden rounded-[5px] border-2 border-[#a8a8a8] bg-white">
        <input id="scale" defaultValue="1:253467" className="min-w-0 flex-1 bg-transparent pl-[6px] text-[22px]" />
        <button type="button" aria-label="Scale presets" className="flex w-10 items-center justify-center border-l-2 border-[#b4b4b4] bg-[#f8f8f8]"><Caret /></button>
      </span>
      <button type="button" aria-label="Lock scale" className="ml-6"><svg viewBox="0 0 24 30" className="h-[30px] w-6" aria-hidden="true"><path d="M5 15V9q0-7 7-7t7 7v6" fill="none" stroke="#999" strokeWidth="3" /><rect x="0" y="14" width="24" height="16" rx="2" fill="#666" /></svg></button>
      <label htmlFor="magnifier" className="ml-4">Magnifier</label>
      <Spin id="magnifier" value="100%" className="ml-2 w-[188px]" />
      <label htmlFor="rotation" className="ml-5">Rotation</label>
      <Spin id="rotation" value="0.0 °" className="ml-5 w-[181px]" />
      <label className="ml-3 flex items-center gap-[10px] text-[#222]"><Check checked />Render</label>
      <button type="button" className="ml-9 flex items-center gap-2">
        <Svg box={32} className="size-8"><path d="M8 3h16l8 13-8 13q-8 4-16 0L0 16z" fill="none" stroke="#777" strokeWidth="2" /><path d="M1 12h30M3 7h26M0 17h32M5 23h22M16 2v29M10 3q-4 13 0 27M22 3q4 13 0 27" fill="none" stroke="#777" strokeWidth="2" /></Svg>
        EPSG:4283
      </button>
      <button type="button" aria-label="Messages" className="ml-[38px]"><svg viewBox="0 0 34 32" className="h-8 w-[34px]" aria-hidden="true"><path d="M17 1q16 0 16 13 0 7-6 10 0 4 4 7-7 0-10-5Q1 28 1 14 1 1 17 1z" fill="#666" /><g fill="#fff"><circle cx="9" cy="14" r="2.500" /><circle cx="17" cy="14" r="2.500" /><circle cx="25" cy="14" r="2.500" /></g></svg></button>
    </footer>
  );
}

export default function App() {
  return (
    <div className="bg-black">
      <main className="relative flex h-screen w-full flex-col overflow-hidden rounded-[10px] bg-[#ebebeb] font-['Inter',sans-serif] font-medium">
        <header className="flex h-[42px] shrink-0 items-center border-b-2 border-[#b0b0b0] bg-linear-to-b from-[#e6e6e6] to-[#cfcfcf] px-4">
          <div className="flex flex-1 gap-4">
            {["Close", "Minimise", "Zoom"].map((n) => <button key={n} type="button" aria-label={n} className="size-6 rounded-full border border-[#b4b4b4] bg-[#d0d0d0]" />)}
          </div>
          <h1 className="pt-[2px] text-[25px] text-[#444]">*Raster map - QGIS</h1>
          <div className="flex-1" />
        </header>

        <nav aria-label="Project toolbar" className="flex h-[76px] shrink-0 items-center border-b-2 border-[#b4b4b4] bg-linear-to-b from-[#f6f6f6] to-[#ececec] pt-1">
          <div className="flex w-[1475px] shrink-0 items-center overflow-hidden">
            <Grip className="w-[25px] pl-2" />
            <Tool label="New"><FileIcon /></Tool>
            <Tool label="Open"><FolderIcon /></Tool>
            <Tool label="Save"><SaveIcon /></Tool>
            <Tool label="Layout"><LayoutIcon /></Tool>
            <Tool label="Pan" className="ml-[164px] rounded-[5px] border-2 border-[#aaa] bg-[#dcdcdc]"><HandIcon /></Tool>
            <Tool label="Pan to selection"><ArrowsIcon /></Tool>
            <Tool label="Zoom in"><ZoomIcon /></Tool>
            <Tool label="Zoom out"><ZoomIcon /></Tool>
            <Tool label="Zoom full"><ZoomFullIcon /></Tool>
            <Tool label="Zoom to selection"><ZoomIcon /></Tool>
            <Tool label="Zoom to layer"><ZoomIcon /></Tool>
            <Tool label="Zoom native"><ZoomIcon /></Tool>
          </div>
          <Tool label="Run action"><GearDimIcon /></Tool><Menu label="Action menu" />
          <Tool label="Select features"><SelectIcon /></Tool><Menu label="Select menu" />
          <Tool label="Select by value"><FormSelectIcon /></Tool><Menu label="Select by menu" />
          <Tool label="Deselect"><DeselectIcon /></Tool>
          <Tool label="Attribute table"><TableIcon /></Tool>
          <Tool label="Field calculator"><AbacusIcon /></Tool>
          <Tool label="Toolbox"><GearIcon /></Tool>
          <Tool label="Statistics"><SigmaIcon /></Tool>
          <Tool label="Measure"><RulerIcon /></Tool><Menu label="Measure menu" />
          <Tool label="Map tips"><TipIcon /></Tool>
          <Tool label="Text annotation"><TextNoteIcon /></Tool><Menu label="Annotation menu" />
        </nav>

        <nav aria-label="Layer toolbar" className="flex h-[78px] shrink-0 items-center border-b-2 border-[#b4b4b4] bg-linear-to-b from-[#f6f6f6] to-[#ececec] pt-[5px]">
          <div className="flex w-[1513px] shrink-0 items-center">
            <Grip className="w-[25px] pl-2" />
            <Tool label="Data source manager"><StackIcon /></Tool>
            <Tool label="New GeoPackage"><PackageIcon /></Tool>
            <Tool label="New shapefile"><VectorIcon /></Tool>
            <Tool label="New SpatiaLite"><FeatherIcon /></Tool>
          </div>
          <Tool label="Pin labels"><LabelIcon kind="pin" /></Tool>
          <Tool label="Show labels"><LabelIcon kind="eye" /></Tool>
          <Tool label="Move label"><LabelIcon kind="move" /></Tool>
          <Tool label="Rotate label"><LabelIcon kind="turn" /></Tool>
          <Tool label="Change label"><LabelIcon kind="edit" /></Tool>
          <Grip />
          <Tool label="Add web layer"><GlobePlusIcon /></Tool>
          <Tool label="Search web layer"><GlobeSearchIcon /></Tool>
          <Tool label="MetaSearch"><GlobeBinocularsIcon /></Tool>
          <Grip />
          <Tool label="Python console"><PythonIcon /></Tool>
          <Grip />
          <Tool label="Help contents"><BookIcon /></Tool>
          <Grip />
        </nav>

        <div className="flex min-h-0 flex-1">
          <LeftDock />
          <div className="flex min-w-0 flex-1 pt-[2px]">
            <div className="min-w-0 flex-1 overflow-hidden border-x-2 border-t-2 border-[#b4b4b4]"><MapView /></div>
          </div>
        </div>

        <StatusBar />
        <ClipDialog />
      </main>
    </div>
  );
}
